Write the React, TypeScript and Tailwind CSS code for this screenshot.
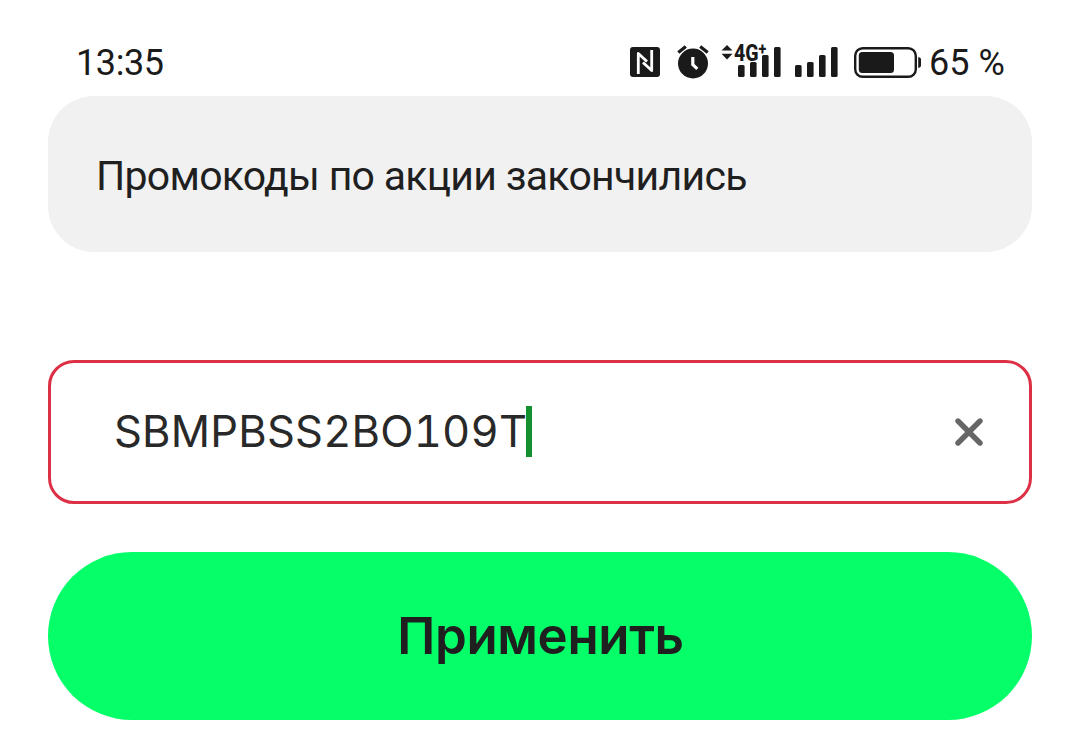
import React from "react";

const NfcIcon = () => (
  <svg className="h-[30px] w-[30px]" viewBox="0 0 30 30" fill="none">
    <rect width="30" height="30" rx="3" fill="#1a1a1a" />
    <path
      d="M8.3 27V6.5L17 14.5M13 15.5L21.7 23.5V3"
      stroke="#fff"
      strokeWidth="2.8"
      strokeLinejoin="round"
    />
  </svg>
);

const AlarmIcon = () => (
  <svg className="h-[34px] w-[32px]" viewBox="0 0 32 34" fill="none">
    <circle cx="16" cy="18.5" r="15" fill="#1a1a1a" />
    <path
      d="M1.3 7.4L8.8 1.4M23.2 1.4L30.7 7.4"
      stroke="#1a1a1a"
      strokeWidth="3.2"
    />
    <path d="M15.8 12V19.6L20.3 23.8" stroke="#fff" strokeWidth="3.2" />
  </svg>
);

const ArrowsIcon = () => (
  <svg className="h-[15px] w-[12px]" viewBox="0 0 12 15" fill="#1a1a1a">
    <path d="M6 0L11.5 5.6H0.5ZM6 14.5L11.5 8.8H0.5Z" />
  </svg>
);

const SignalIcon = () => (
  <svg className="h-[30px] w-[43px]" viewBox="0 0 43 30" fill="#1a1a1a">
    <rect x="0" y="18" width="6.6" height="12" rx="1.5" />
    <rect x="12" y="15" width="6.6" height="15" rx="1.5" />
    <rect x="24" y="8" width="6.6" height="22" rx="1.5" />
    <rect x="36" y="0" width="6.6" height="30" rx="1.5" />
  </svg>
);

const BatteryIcon = () => (
  <svg className="h-[31px] w-[67px]" viewBox="0 0 67 31" fill="none">
    <rect
      x="1.2"
      y="1.2"
      width="60.6"
      height="28.6"
      rx="7.5"
      stroke="#1a1a1a"
      strokeWidth="2.4"
    />
    <rect x="4.8" y="5" width="35.2" height="21" rx="3.5" fill="#1a1a1a" />
    <path d="M64.2 10V21C66.5 20.6 67 19.7 67 18V13C67 11.3 66.5 10.4 64.2 10Z" fill="#1a1a1a" />
  </svg>
);

const StatusBar = () => (
  <header className="flex h-24 items-start pt-[45px] pl-[76px] font-['Roboto',sans-serif] text-[36px] leading-[36px] text-[#1a1a1a]">
    <span className="w-[554px] tracking-[-0.4px]">13:35</span>
    <div className="flex items-start pt-[2px]">
      <NfcIcon />
      <div className="-mt-[2px] ml-[17px]">
        <AlarmIcon />
      </div>
      <div className="-mt-[2px] ml-[12px]">
        <ArrowsIcon />
      </div>
      <div className="relative ml-[5px]">
        <SignalIcon />
        <span className="absolute -top-[5px] -left-[4px] flex origin-left scale-x-[0.85] text-[23px] leading-[23px] font-extrabold [-webkit-text-stroke:2px_white] [paint-order:stroke_fill]">
          4G<span className="-mt-[5px] text-[17px]">+</span>
        </span>
      </div>
      <div className="ml-[14px]">
        <SignalIcon />
      </div>
      <div className="ml-[16px]">
        <BatteryIcon />
      </div>
    </div>
    <span className="ml-[8px] whitespace-nowrap">65 %</span>
  </header>
);

export default function App() {
  return (
    <div className="h-[741px] w-[1080px] overflow-hidden bg-white">
      <StatusBar />

      <main className="px-12 text-[#1f1f1f]">
        <div className="flex h-[156px] items-center rounded-[46px] bg-[#f1f1f1] pt-[5px] pl-12 font-['Roboto',sans-serif] text-[41px] tracking-[-0.72px]">
          <span className="whitespace-nowrap">
            Промокоды по акции закончились
          </span>
        </div>

        <div className="mt-[108px] flex h-36 items-center rounded-[26px] border-3 border-[#dc3045] pr-[46px] pb-[1px] pl-[63px] font-['Inter',sans-serif]">
          <span className="mr-[-1px] text-[43.5px] tracking-[0.2px] whitespace-nowrap text-[#292929] tabular-nums">
            SBMPBSS2BO109T
          </span>
          <span className="h-[51px] w-[6px] bg-[#15902f]" />
          <button className="ml-auto" aria-label="Очистить">
            <svg className="h-[28px] w-[28px]" viewBox="0 0 28 28">
              <path
                d="M3 3L25 25M25 3L3 25"
                stroke="#666"
                strokeWidth="5.4"
                strokeLinecap="round"
              />
            </svg>
          </button>
        </div>

        <button className="mt-12 flex h-[168px] w-full items-center justify-center rounded-full bg-[#04ff69] pt-[1px] pl-px font-['Inter',sans-serif] text-[51px] font-semibold tracking-[-0.35px]">
          <span className="whitespace-nowrap">Применить</span>
        </button>
      </main>
    </div>
  );
}
